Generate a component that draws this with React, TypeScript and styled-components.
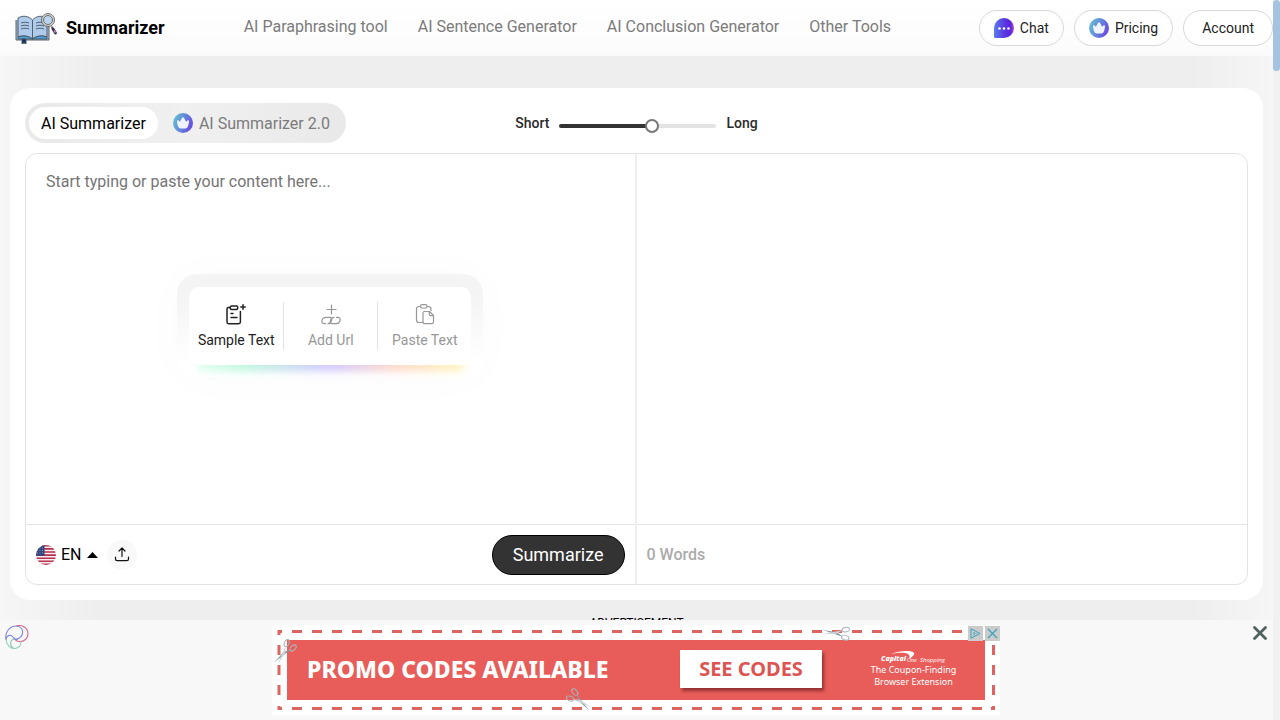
import React, { useState } from "react";
import styled, { createGlobalStyle } from "styled-components";

const GlobalStyle = createGlobalStyle`
  *, *::before, *::after { box-sizing: border-box; }
  body {
    margin: 0;
    background: #f7f7f7;
    color: #000;
    font-family: Roboto, "Liberation Sans", sans-serif;
    font-size: 16px;
    overflow: hidden;
  }
  button, input, textarea { font: inherit; margin: 0; }
  button { cursor: pointer; }
  a { color: inherit; text-decoration: none; }
`;

const Page = styled.div`
  min-height: 100vh;
  padding-right: 7px;
`;

const Header = styled.header`
  position: relative;
  z-index: 1;
  display: flex;
  align-items: center;
  height: 56px;
  padding-left: 14px;
  background: linear-gradient(#fff, #fbfbfb);
`;

const Brand = styled.a`
  display: flex;
  align-items: center;
  gap: 8px;
  font-size: 18px;
  font-weight: 700;
  line-height: 24px;
`;

const Nav = styled.nav`
  display: flex;
  gap: 30px;
  margin-left: 79px;
  padding-bottom: 2px;
  line-height: 24px;
  color: #7b7b7b;
  white-space: nowrap;
`;

const HeaderActions = styled.div`
  display: flex;
  gap: 10px;
  margin-left: auto;
`;

const PillButton = styled.button<{ $wide?: boolean }>`
  display: flex;
  align-items: center;
  gap: 6px;
  height: 36px;
  padding: 0 ${(p) => (p.$wide ? 18 : 14)}px;
  border: 1px solid #d8d8d8;
  border-radius: 18px;
  background: #fff;
  color: #222;
  font-size: 14px;
`;

const Main = styled.main`
  padding: 32px 10px 0;
  background: linear-gradient(
    90deg,
    #f6f6f6,
    #f2f2f2 50px,
    #eeeeee 100px,
    #eeeeee calc(100% - 80px),
    #f6f6f6
  );
`;

const Card = styled.section`
  padding: 15px;
  border-radius: 20px;
  background: #fff;
`;

const Toolbar = styled.div`
  display: grid;
  grid-template-columns: 1fr auto 1fr;
  align-items: center;
  margin-bottom: 10px;
`;

const Toggle = styled.div`
  display: flex;
  justify-self: start;
  padding: 4px;
  border-radius: 20px;
  background: linear-gradient(90deg, #e9e9e9, #f0f0f0 50%, #e9e9e9);
`;

const ToggleButton = styled.button<{ $active?: boolean }>`
  display: flex;
  align-items: center;
  gap: 6px;
  height: 32px;
  padding: 0 12px;
  border: 0;
  border-radius: 16px;
  background: ${(p) => (p.$active ? "#fff" : "transparent")};
  color: ${(p) => (p.$active ? "#000" : "#7b7b7b")};
  & + & { margin-left: 3px; }
`;

const LengthControl = styled.label`
  display: flex;
  align-items: center;
  gap: 10px;
  font-size: 14px;
  font-weight: 500;
  color: #2b2b2b;
`;

const Range = styled.input`
  appearance: none;
  width: 157px;
  height: 4px;
  margin-top: 6px;
  border-radius: 2px;
  outline: none;
  &::-webkit-slider-thumb {
    appearance: none;
    width: 14px;
    height: 14px;
    border: 2px solid #777;
    border-radius: 50%;
    background: #fff;
  }
`;

const Editor = styled.div`
  display: grid;
  grid-template-columns: 1fr 1fr;
  border: 1px solid #e3e3e3;
  border-radius: 12px;
  overflow: hidden;
`;

const Pane = styled.div`
  display: flex;
  flex-direction: column;
  &:first-child { border-right: 2px solid #f0f0f0; }
`;

const PaneBody = styled.div`
  position: relative;
  display: flex;
  height: 370px;
`;

const TextBox = styled.textarea`
  flex: 1;
  padding: 18px 20px;
  border: 0;
  outline: none;
  resize: none;
  background: transparent;
  line-height: 20px;
  &::placeholder { color: #757575; }
`;

const PaneFooter = styled.div`
  display: flex;
  align-items: center;
  height: 60px;
  padding: 0 10px;
  border-top: 1px solid #e3e3e3;
`;

const Starter = styled.div`
  position: absolute;
  top: 120px;
  left: 50%;
  transform: translateX(-50%);
  padding: 13px 12px;
  border-radius: 20px;
  background: linear-gradient(#f4f4f4 20%, rgba(255, 255, 255, 0) 85%);
  box-shadow: 0 0 50px rgba(0, 0, 0, 0.02);
`;

const StarterCard = styled.div`
  position: relative;
  display: flex;
  align-items: center;
  height: 78px;
  border-radius: 10px;
  background: #fff;
  &::after {
    content: "";
    position: absolute;
    z-index: -1;
    right: 8px;
    bottom: -6px;
    left: 8px;
    height: 12px;
    background: linear-gradient(90deg, #e0fff0, #baf7dc 18%, #cdc3ff 50%, #ffd6c4 75%, #fff3b8);
    filter: blur(4px);
  }
`;

const StarterButton = styled.button<{ $strong?: boolean }>`
  display: flex;
  flex-direction: column;
  align-items: center;
  gap: 5px;
  width: 94px;
  height: 48px;
  padding: 2px 0 0;
  border: 0;
  background: none;
  color: ${(p) => (p.$strong ? "#222" : "#979797")};
  font-size: 14px;
  line-height: 20px;
  & + & { border-left: 1px solid #e3e3e3; }
`;

const LanguageButton = styled.button`
  display: flex;
  align-items: center;
  gap: 5px;
  padding: 0;
  border: 0;
  background: none;
`;

const UploadButton = styled.button`
  display: grid;
  place-items: center;
  width: 30px;
  height: 30px;
  margin-left: 9px;
  padding: 0;
  border: 0;
  border-radius: 50%;
  background: #f9f9f9;
`;

const SubmitButton = styled.button`
  height: 40px;
  margin-left: auto;
  padding: 0 20px;
  border: 1px solid #000;
  border-radius: 20px;
  background: #333;
  color: #fff;
  font-size: 18px;
`;

const WordCount = styled.span`
  font-weight: 500;
  color: #ababab;
`;

const AdLabel = styled.p`
  margin: 16px 0 0;
  font-size: 12px;
  line-height: 14px;
  text-align: center;
`;

const AdBar = styled.aside`
  position: fixed;
  z-index: 2;
  right: 0;
  bottom: 0;
  left: 0;
  display: grid;
  grid-template-columns: 1fr auto 1fr;
  height: 100px;
  padding: 5px 12px 5px 4px;
  background: #f8f8f8;
`;

const CloseButton = styled.button`
  justify-self: end;
  align-self: start;
  height: 16px;
  padding: 0;
  border: 0;
  background: none;
`;

const Banner = styled.div`
  position: relative;
  width: 728px;
  height: 90px;
  padding: 15px;
  background: #fff;
`;

const BannerLink = styled.a`
  display: flex;
  align-items: center;
  height: 60px;
  padding: 0 20px 2px;
  background: #e85d5a;
  color: #fff;
  font-family: "Noto Sans", "Open Sans", sans-serif;
  white-space: nowrap;
`;

const BannerTitle = styled.strong`
  width: 373px;
  font-size: 23px;
  font-weight: 800;
  line-height: 32px;
`;

const BannerCta = styled.span`
  width: 142px;
  height: 38px;
  background: #fff;
  box-shadow: 2px 3px 3px rgba(90, 20, 20, 0.6);
  color: #dc5552;
  font-size: 20px;
  font-weight: 700;
  line-height: 38px;
  text-align: center;
`;

const Sponsor = styled.span`
  display: flex;
  flex: 1;
  flex-direction: column;
  align-items: center;
  padding-left: 40px;
  font-size: 9px;
  line-height: 12px;
`;

const BannerArt = styled.svg`
  position: absolute;
  inset: 0;
  pointer-events: none;
`;

const AdChoices = styled.div`
  position: absolute;
  top: 1px;
  right: 0;
  display: flex;
  gap: 2px;
`;

const AdChoice = styled.button`
  display: grid;
  place-items: center;
  width: 15px;
  height: 15px;
  padding: 0;
  border: 0;
  background: #cbcbcb;
`;

const Scrollbar = styled.div`
  position: fixed;
  z-index: 3;
  top: 0;
  right: 0;
  bottom: 0;
  width: 7px;
  background: #f1f1f1;
`;

const ScrollThumb = styled.div`
  height: 71px;
  border-radius: 4px;
  background: #a3c3e0;
`;

const BookLogo = () => (
  <svg width="44" height="32" viewBox="0 0 44 32" fill="none" stroke="#4a5662" strokeWidth="0.9">
    <path d="M2 8v20h33V8" fill="#a9bccb" />
    <path d="M4 6c5-3 11-2 14.500 2C22 4 28 3 33 6v19c-5-2-11-1-14.500 2C15 24 9 23 4 25z" fill="#aecbeb" />
    <path d="M4 25c5-2 11-1 14.500 2C22 24 28 23 33 25v2H4z" fill="#4d9fd8" />
    <path d="M18.500 8v19M7 11c3-1 5-1 8 0M7 14c3-1 5-1 8 0M7 17c3-1 5-1 8 0M22 11c3-1 5-1 8 0M22 14c3-1 5-1 8 0M22 17c3-1 5-1 8 0" />
    <path d="M8 27h4v5l-2-1-2 1z" fill="#162f66" />
    <circle cx="34" cy="8" r="6.500" fill="#d8d8d5" stroke="#60615f" />
    <circle cx="34" cy="8" r="4.500" fill="#b9d5ef" stroke="#60615f" />
    <path d="M37.500 14.500 39 17" stroke="#555" strokeWidth="1.500" />
    <path d="m39 17 2.500 4" stroke="#3a2c55" strokeWidth="2.800" strokeLinecap="round" />
    <path d="m40 18.500 1.500 2" stroke="#c486b8" strokeWidth="1.500" />
  </svg>
);

const Crown = () => (
  <svg width="20" height="20" viewBox="0 0 20 20">
    <defs>
      <linearGradient id="crownFill" x1="0" y1="0.3" x2="1" y2="0.7">
        <stop stopColor="#64c0d0" />
        <stop offset="0.5" stopColor="#6384dc" />
        <stop offset="1" stopColor="#6a45df" />
      </linearGradient>
    </defs>
    <circle cx="10" cy="10" r="10" fill="url(#crownFill)" />
    <path
      d="M4 8c0-.9.900-1.100 1.500-.5l1.400 1.200 2.200-3.900c.4-.7 1.400-.7 1.800 0l2.200 3.900 1.400-1.200c.6-.6 1.500-.4 1.500.5-.1 2.200-.5 4-1.300 5.700-.5 1.100-1.300 1.700-2.500 1.700H7.800c-1.200 0-2-.6-2.500-1.700C4.500 12 4.100 10.200 4 8z"
      fill="#f0f2ff"
    />
  </svg>
);

const ChatIcon = () => (
  <svg width="20" height="20" viewBox="0 0 20 20">
    <defs>
      <linearGradient id="chatFill" x1="0" y1="0.5" x2="1" y2="0.5">
        <stop stopColor="#5a7df0" />
        <stop offset="0.5" stopColor="#5a3be0" />
        <stop offset="0.8" stopColor="#5a22e0" />
        <stop offset="1" stopColor="#a04ccc" />
      </linearGradient>
    </defs>
    <path d="M10 0a10 10 0 1 1 0 20H1.500C.6 20 0 19.400 0 18.500V10A10 10 0 0 1 10 0z" fill="url(#chatFill)" />
    <g fill="#fff">
      <circle cx="5.500" cy="10.500" r="1.300" />
      <circle cx="10" cy="10.500" r="1.300" />
      <circle cx="14.500" cy="10.500" r="1.300" />
    </g>
  </svg>
);

const SampleIcon = () => (
  <svg width="20" height="21" viewBox="0 0 20 21" fill="none" stroke="currentColor" strokeWidth="1.500" strokeLinecap="round" strokeLinejoin="round">
    <path d="M4 3.500H2.500C1.500 3.500 1 4 1 5v13c0 1.200.6 1.700 1.700 1.700h10c1.100 0 1.700-.6 1.700-1.700V7.500" />
    <path d="M5.500 2h5c.8 0 1.200.4 1.200 1.100v1.200c0 .8-.4 1.200-1.200 1.200h-5c-.8 0-1.200-.4-1.200-1.200V3.100C4.300 2.400 4.700 2 5.500 2zM5 9.500h2M5 13.500h6M17 .8v4.400M14.800 3h4.400" />
  </svg>
);

const LinkIcon = () => (
  <svg width="20" height="21" viewBox="0 0 20 21" fill="none" stroke="currentColor" strokeWidth="1.200" strokeLinecap="round">
    <path d="M10.500 1v9M6 5.500h9" />
    <path d="M4.500 19.700H3.300C1.300 19.700.5 18.300 1 16.500 1.500 14.300 3 13.300 5 13.300h3.500c2 0 2.500 1.300 2 3.200-.5 2-1.500 3.200-3.500 3.200" />
    <path d="M15.500 13.300h1.200c2 0 2.800 1.400 2.300 3.200-.5 2.200-2 3.200-4 3.200h-3.500c-2 0-2.500-1.300-2-3.200.5-2 1.500-3.200 3.500-3.200" />
  </svg>
);

const PasteIcon = () => (
  <svg width="20" height="21" viewBox="0 0 20 21" fill="none" stroke="currentColor" strokeWidth="1.200" strokeLinejoin="round">
    <path d="M5.500 2.500H4C2.500 2.500 1.500 3.500 1.500 5v11c0 1.500 1 2.500 2.500 2.500h4M12 2.500h1.500c1.500 0 2.500 1 2.500 2.500v2" />
    <rect x="5.500" y="0.700" width="6.500" height="3.300" rx="1.600" />
    <path d="M9.500 7.500h5l4 4V18c0 1-.5 1.700-1.500 1.700H9.500C8.500 19.700 8 19 8 18V9c0-1 .5-1.500 1.500-1.500zM14.300 7.700v2.500c0 1 .5 1.500 1.500 1.500h2.500" />
  </svg>
);

const Flag = () => (
  <svg width="20" height="20" viewBox="0 0 20 20">
    <defs>
      <clipPath id="flagClip">
        <circle cx="10" cy="10" r="10" />
      </clipPath>
    </defs>
    <g clipPath="url(#flagClip)">
      <rect width="20" height="20" fill="#f4eef2" />
      <path d="M0 .8h20M0 3.900h20M0 7h20M0 10.100h20M0 13.200h20M0 16.300h20M0 19.400h20" stroke="#b9304c" strokeWidth="1.600" />
      <rect width="8.500" height="10.800" fill="#2f437d" />
      <path d="M1 3h7M1 5.500h7M1 8h7" stroke="#a7b4d6" strokeWidth="0.800" strokeDasharray="1 1.500" />
    </g>
  </svg>
);

const UploadIcon = () => (
  <svg width="16" height="16" viewBox="0 0 16 16" fill="none" stroke="#111" strokeWidth="1.200" strokeLinecap="round" strokeLinejoin="round">
    <path d="M8 9.500V1M5 4l3-3 3 3M1.500 10v2c0 1 .7 1.700 1.700 1.700h9.600c1 0 1.700-.7 1.700-1.700v-2" />
  </svg>
);

const Swirl = () => (
  <svg width="25" height="25" viewBox="0 0 25 25" fill="none" strokeWidth="1.100">
    <path d="M12 1c6-2 12 2 12 7.500S19.500 17 15 16.500c-2 0-3-1-4-2" stroke="#d86b91" />
    <path d="M2 15C.5 7 6 1 12 1c5 0 7.500 4 6.500 8-1.200 4.500-6 6-9.500 5" stroke="#8587dc" />
    <path d="M2 14c1-4 5-5 7-2 1.500 2 3.500 2.500 5 2.500" stroke="#7782dd" />
    <path d="M2 14c.5 6 4 10 9 9.500 3.500-.5 6-3 6-7M9.500 23.500C5 20 6 15 10 14" stroke="#8fcdb9" />
  </svg>
);

const Scissors = ({ at }: { at: string }) => (
  <g transform={`${at} scale(0.95 0.8)`} fill="none" stroke="#a9b5bb" strokeWidth="1.200">
    <ellipse cx="-10" cy="-5" rx="4" ry="2.800" transform="rotate(20 -10 -5)" />
    <ellipse cx="-10" cy="5" rx="4" ry="2.800" transform="rotate(-20 -10 5)" />
    <path d="m-7-4 21 6.500L-1 1z" fill="#8b989d" stroke="none" />
    <path d="m-7 4 21-6.500L-1-1z" fill="#cbd6da" stroke="none" />
  </g>
);

const CapitalLogo = () => (
  <svg width="70" height="13" viewBox="0 0 70 13" fill="#fff">
    <path d="M12 3C20-.5 33-1 35 2c1 2-2 4-5 6 1-3 1-5-4-6-4-.7-9 0-14 1z" />
    <text x="2" y="10" fontSize="7" fontWeight="800" fontStyle="italic" fontFamily="Open Sans, sans-serif">Capital</text>
    <text x="28" y="11" fontSize="6" fontStyle="italic" fontFamily="Liberation Serif, serif">One</text>
    <text x="41" y="11" fontSize="6" fontStyle="italic" fontFamily="Open Sans, sans-serif">Shopping</text>
  </svg>
);

const links = ["AI Paraphrasing tool", "AI Sentence Generator", "AI Conclusion Generator", "Other Tools"];

export default function App() {
  const [length, setLength] = useState(60);
  const fill = `linear-gradient(90deg, #333 ${length}%, #e3e3e3 ${length}%)`;

  return (
    <>
      <GlobalStyle />
      <Page>
        <Header>
          <Brand href="#">
            <BookLogo />
            Summarizer
          </Brand>
          <Nav>
            {links.map((label) => (
              <a key={label} href="#">{label}</a>
            ))}
          </Nav>
          <HeaderActions>
            <PillButton><ChatIcon />Chat</PillButton>
            <PillButton><Crown />Pricing</PillButton>
            <PillButton $wide>Account</PillButton>
          </HeaderActions>
        </Header>

        <Main>
          <Card>
            <Toolbar>
              <Toggle>
                <ToggleButton $active>AI Summarizer</ToggleButton>
                <ToggleButton><Crown />AI Summarizer 2.0</ToggleButton>
              </Toggle>
              <LengthControl>
                Short
                <Range
                  type="range"
                  aria-label="Summary length"
                  value={length}
                  onChange={(e) => setLength(Number(e.target.value))}
                  style={{ background: fill }}
                />
                Long
              </LengthControl>
            </Toolbar>

            <Editor>
              <Pane>
                <PaneBody>
                  <TextBox aria-label="Content" placeholder="Start typing or paste your content here..." />
                  <Starter>
                    <StarterCard>
                      <StarterButton $strong><SampleIcon />Sample Text</StarterButton>
                      <StarterButton><LinkIcon />Add Url</StarterButton>
                      <StarterButton><PasteIcon />Paste Text</StarterButton>
                    </StarterCard>
                  </Starter>
                </PaneBody>
                <PaneFooter>
                  <LanguageButton aria-haspopup="listbox">
                    <Flag />
                    EN
                    <svg width="11" height="6" viewBox="0 0 11 6"><path d="M0 6 5.500 0 11 6z" /></svg>
                  </LanguageButton>
                  <UploadButton aria-label="Upload file"><UploadIcon /></UploadButton>
                  <SubmitButton>Summarize</SubmitButton>
                </PaneFooter>
              </Pane>
              <Pane>
                <PaneBody />
                <PaneFooter><WordCount>0 Words</WordCount></PaneFooter>
              </Pane>
            </Editor>
          </Card>
          <AdLabel>ADVERTISEMENT</AdLabel>
        </Main>
      </Page>

      <AdBar>
        <Swirl />
        <Banner>
          <BannerLink href="#">
            <BannerTitle>PROMO CODES AVAILABLE</BannerTitle>
            <BannerCta>SEE CODES</BannerCta>
            <Sponsor>
              <CapitalLogo />
              <span>The Coupon-Finding</span>
              <span>Browser Extension</span>
            </Sponsor>
          </BannerLink>
          <BannerArt width="728" height="90" viewBox="0 0 728 90" fill="none">
            <path d="M20 6.500H700M20 83.500H720" stroke="#dc6461" strokeWidth="3" strokeDasharray="10 10" />
            <path d="M7 20V80M721.500 20V80" stroke="#dc6461" strokeWidth="3" strokeDasharray="10 10" />
            <path d="M7 10V6.500h3M7 81v2.500h3M719 83.500h2.500V81" stroke="#dc6461" strokeWidth="3" />
            <Scissors at="translate(12 28) rotate(128)" />
            <Scissors at="translate(564 8) rotate(184)" />
            <Scissors at="translate(308 76) rotate(37)" />
          </BannerArt>
          <AdChoices>
            <AdChoice aria-label="Ad choices">
              <svg width="11" height="11" viewBox="0 0 11 11" fill="none" stroke="#38a4bd"><path d="M1 .8 10 5.500 1 10.200zM4 4v3.500M6 5v1" /></svg>
            </AdChoice>
            <AdChoice aria-label="Hide ad">
              <svg width="11" height="11" viewBox="0 0 11 11" stroke="#38a4bd" strokeWidth="1.300"><path d="m1 1 9 9M10 1l-9 9" /></svg>
            </AdChoice>
          </AdChoices>
        </Banner>
        <CloseButton aria-label="Close advertisement">
          <svg width="16" height="16" viewBox="0 0 16 16" stroke="#4f625f" strokeWidth="2.800" strokeLinecap="round"><path d="m2.500 2.500 11 11M13.500 2.500l-11 11" /></svg>
        </CloseButton>
      </AdBar>

      <Scrollbar><ScrollThumb /></Scrollbar>
    </>
  );
}
